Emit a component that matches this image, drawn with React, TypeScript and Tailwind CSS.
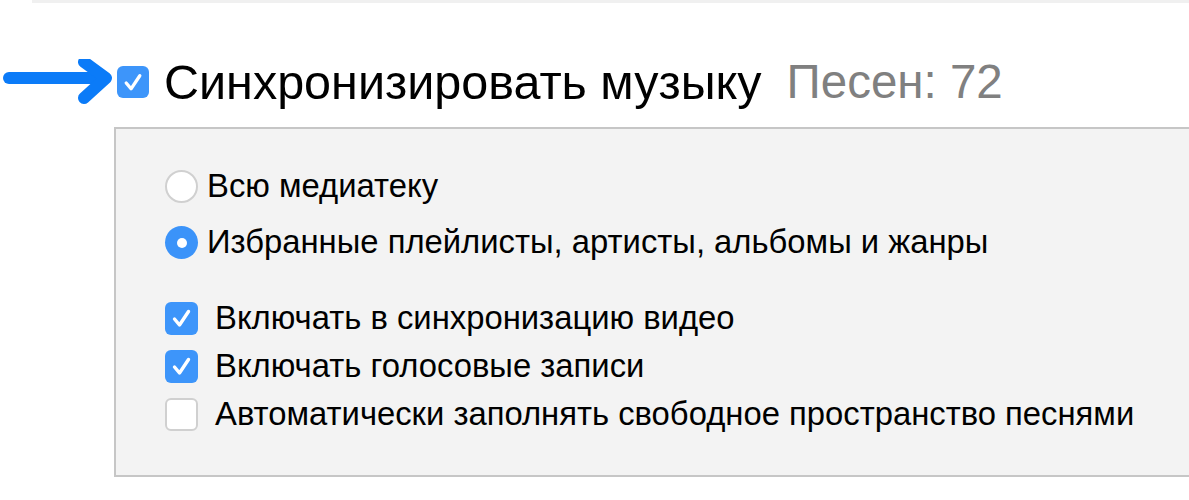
import React from "react";

const font = { fontFamily: '"Liberation Sans", Arial, sans-serif' };

function Check({ on, size = 33 }: { on: boolean; size?: number }) {
  if (!on) {
    return (
      <div className="w-[33px] h-[33px] shrink-0 rounded-[6px] border-2 border-[#d0d0d0] bg-white" />
    );
  }
  return (
    <div
      className="shrink-0 rounded-[6px] bg-[#3d95fa] flex items-center justify-center"
      style={{ width: size, height: size }}
    >
      <svg width="33" height="33" viewBox="0 0 33 33" fill="none">
        <path
          d="M9.5 17 L14.5 23 L23.5 9.5"
          stroke="white"
          strokeWidth="3.4"
          strokeLinecap="round"
          strokeLinejoin="round"
        />
      </svg>
    </div>
  );
}

function Radio({ on }: { on: boolean }) {
  if (on) {
    return (
      <div className="w-[33px] h-[33px] shrink-0 rounded-full bg-[#3b93f9] flex items-center justify-center">
        <div className="w-[10px] h-[10px] rounded-full bg-white" />
      </div>
    );
  }
  return (
    <div className="w-[33px] h-[33px] shrink-0 rounded-full border-2 border-[#d0d0d0] bg-white" />
  );
}

export default function App() {
  return (
    <div className="w-[1189px] h-[500px] bg-white overflow-hidden text-black" style={font}>
      <div className="ml-[32px] h-[3px] bg-[#f0f0f0]" />

      <div className="flex items-center mt-[57px] h-[44px]">
        <svg width="114" height="46" viewBox="0 0 114 46" className="shrink-0">
          <g stroke="#0b7bf8" strokeWidth="12" strokeLinecap="round" strokeLinejoin="round" fill="none">
            <path d="M9 19 L104 19" />
            <path d="M84 3 L106 19 L84 39" />
          </g>
        </svg>
        <div className="ml-[3px]">
          <Check on size={32} />
        </div>
        <div className="ml-[15px] text-[48.5px] leading-none whitespace-nowrap">
          Синхронизировать музыку
        </div>
        <div className="ml-[25px] text-[47.5px] leading-none text-[#808080] whitespace-nowrap">
          Песен: 72
        </div>
      </div>

      <div className="ml-[114px] mt-[23px] w-[1075px] h-[350px] bg-[#f3f3f3] border-t-2 border-l-2 border-b-2 border-[#c6c6c6] pl-[49px] pt-[41px]">
        <div className="flex flex-col gap-[23px]">
          <div className="flex items-center gap-[9px] text-[32.8px] leading-none">
            <Radio on={false} />
            <span>Всю медиатеку</span>
          </div>
          <div className="flex items-center gap-[9px] text-[32.8px] leading-none">
            <Radio on />
            <span>Избранные плейлисты, артисты, альбомы и жанры</span>
          </div>
        </div>
        <div className="flex flex-col gap-[15px] mt-[43px]">
          <div className="flex items-center gap-[17px] text-[32.8px] leading-none">
            <Check on />
            <span>Включать в синхронизацию видео</span>
          </div>
          <div className="flex items-center gap-[17px] text-[32.8px] leading-none">
            <Check on />
            <span>Включать голосовые записи</span>
          </div>
          <div className="flex items-center gap-[17px] text-[32.8px] leading-none">
            <Check on={false} />
            <span>Автоматически заполнять свободное пространство песнями</span>
          </div>
        </div>
      </div>
    </div>
  );
}
